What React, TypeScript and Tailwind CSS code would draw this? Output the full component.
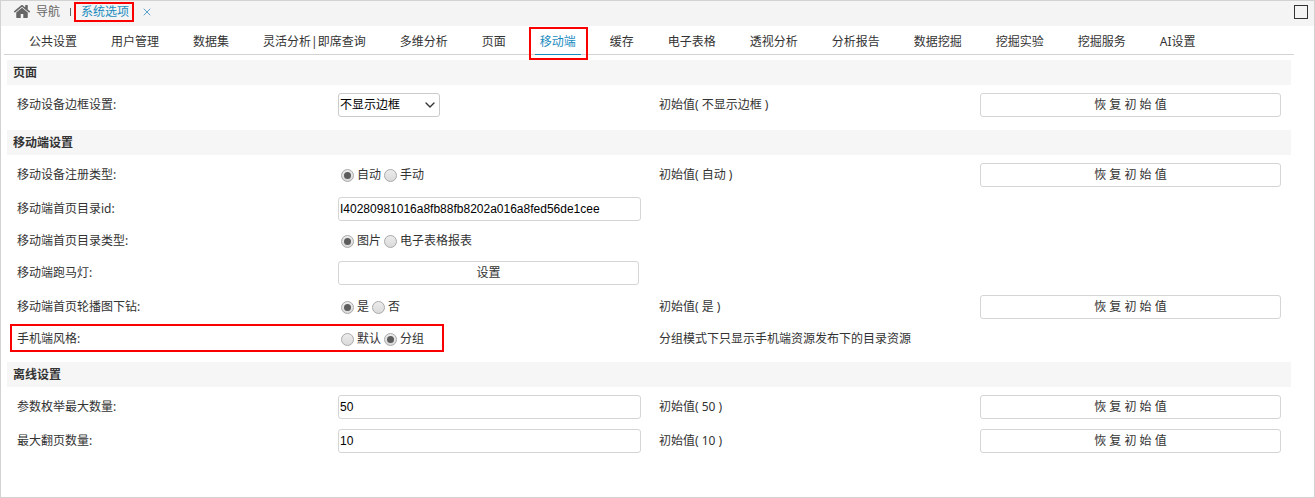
import React, { useState } from 'react';
import { ChevronDown, X } from 'lucide-react';

const tabs = [
  '公共设置',
  '用户管理',
  '数据集',
  '灵活分析|即席查询',
  '多维分析',
  '页面',
  '移动端',
  '缓存',
  '电子表格',
  '透视分析',
  '分析报告',
  '数据挖掘',
  '挖掘实验',
  '挖掘服务',
  'AI设置',
];

function HomeIcon() {
  return (
    <svg viewBox="96 250 1600 1290" className="h-[13px] w-4" fill="currentColor" aria-hidden="true">
      <path d="M1472 992v480q0 26-19 45t-45 19h-384v-384h-256v384h-384q-26 0-45-19t-19-45v-480q0-1 .5-3t.5-3l575-474 575 474q1 2 1 6zm223-69l-62 74q-8 9-21 11h-3q-13 0-21-7l-692-577-692 577q-12 8-24 7-13-2-21-11l-62-74q-8-10-7-23.5t11-21.5l719-599q32-26 76-26t76 26l244 204v-195q0-14 9-23t23-9h192q14 0 23 9t9 23v408l219 182q10 8 11 21.5t-7 23.5z" />
    </svg>
  );
}

function Highlight({ className }: { className: string }) {
  return <span className={`pointer-events-none absolute border-2 border-[#fa0000] ${className}`} />;
}

interface SectionProps {
  title: string;
  children: React.ReactNode;
}

function Section({ title, children }: SectionProps) {
  return (
    <section>
      <h2 className="h-[25px] bg-[#f6f6f6] px-1.5 leading-[25px] font-bold">{title}</h2>
      <div className="pt-[3px] pb-2">{children}</div>
    </section>
  );
}

interface RowProps {
  label: string;
  htmlFor?: string;
  note?: string;
  resettable?: boolean;
  compact?: boolean;
  highlighted?: boolean;
  children: React.ReactNode;
}

function Row({ label, htmlFor, note, resettable, compact, highlighted, children }: RowProps) {
  return (
    <div className={`relative grid grid-cols-4 items-center ${compact ? 'h-[30px]' : 'h-[34px]'}`}>
      <div className="px-2.5">
        {htmlFor ? <label htmlFor={htmlFor}>{label}:</label> : <span>{label}:</span>}
      </div>
      <div className="px-2.5">{children}</div>
      <div className="px-2.5">{note}</div>
      <div className="px-2.5">{resettable && <ActionButton>恢 复 初 始 值</ActionButton>}</div>
      {highlighted && <Highlight className="top-0 left-[3px] h-7 w-[434px]" />}
    </div>
  );
}

function ActionButton({ children }: { children: React.ReactNode }) {
  return (
    <button type="button" className="block h-6 w-full rounded-[3px] border border-[#d5d5d5] bg-white leading-[22px]">
      {children}
    </button>
  );
}

function TextField({ id, initial }: { id: string; initial: string }) {
  const [value, setValue] = useState(initial);

  return (
    <input
      id={id}
      type="text"
      value={value}
      onChange={e => setValue(e.target.value)}
      className="block h-6 w-[calc(100%+2px)] rounded-[3px] border border-[#d5d5d5] bg-white px-px font-['Liberation_Sans',Arial,sans-serif] text-black outline-none"
    />
  );
}

interface RadioGroupProps {
  name: string;
  options: string[];
  initial: string;
}

function RadioGroup({ name, options, initial }: RadioGroupProps) {
  const [selected, setSelected] = useState(initial);

  return (
    <div role="radiogroup" className="flex items-center">
      {options.map(option => (
        <label key={option} className="flex items-center">
          <input
            type="radio"
            name={name}
            checked={selected === option}
            onChange={() => setSelected(option)}
            className="mx-[3px] grid size-[13px] appearance-none place-items-center rounded-full border border-[#a9a9a9] bg-linear-to-b from-[#ececec] to-[#dadada] checked:before:size-[7px] checked:before:rounded-full checked:before:bg-[#5c5c5c] checked:before:content-['']"
          />
          {option}
        </label>
      ))}
    </div>
  );
}

export default function App() {
  const [activeTab, setActiveTab] = useState('移动端');

  return (
    <div className="min-h-screen border border-[#d2d2d2] bg-white font-['Noto_Sans','Noto_Sans_CJK_SC',sans-serif] text-[12px] leading-4 text-[#333]">
      <header className="flex h-[25px] items-center bg-[#f4f4f4] pr-1.5 pb-1 pl-[13px]">
        <a href="#nav" className="flex items-center gap-1.5 text-[#666]">
          <HomeIcon />
          导航
        </a>
        <span className="mx-2.5 h-2 w-px bg-[#666]" />
        <div className="relative">
          <a href="#options" className="text-[#1a8cbf]">系统选项</a>
          <Highlight className="-top-0.5 -left-[7px] h-5 w-[60px]" />
        </div>
        <button type="button" aria-label="关闭" className="ml-3 text-[#5ba3cb]">
          <X className="size-3" strokeWidth={2} />
        </button>
        <button type="button" aria-label="最大化" className="ml-auto size-3.5 border border-[#333]" />
      </header>

      <nav className="mr-5 ml-[3px] flex h-[29px] gap-6 border-b border-[#d2d2d2] pl-5" role="tablist">
        {tabs.map(tab => (
          <button
            key={tab}
            type="button"
            role="tab"
            aria-selected={activeTab === tab}
            onClick={() => setActiveTab(tab)}
            className={`relative -mb-px shrink-0 border-b px-[5px] pt-1 whitespace-nowrap ${
              activeTab === tab ? 'border-[#1a8cbf] text-[#1a8cbf]' : 'border-transparent'
            }`}
          >
            {tab}
            {tab === '移动端' && <Highlight className="top-px -left-1.5 h-[33px] w-[59px]" />}
          </button>
        ))}
      </nav>

      <main className="mt-[5px] mr-[23px] ml-1.5">
        <Section title="页面">
          <Row label="移动设备边框设置" htmlFor="frame" note="初始值( 不显示边框 )" resettable>
            <div className="relative w-[102px]">
              <select
                id="frame"
                defaultValue="none"
                className="block h-6 w-full appearance-none rounded-[3px] border border-[#cbcbcb] bg-white pl-px text-black outline-none"
              >
                <option value="none">不显示边框</option>
                <option value="show">显示边框</option>
              </select>
              <ChevronDown className="pointer-events-none absolute top-1 right-0.5 size-4" strokeWidth={2} />
            </div>
          </Row>
        </Section>

        <Section title="移动端设置">
          <Row label="移动设备注册类型" note="初始值( 自动 )" resettable>
            <RadioGroup name="register" options={['自动', '手动']} initial="自动" />
          </Row>
          <Row label="移动端首页目录id" htmlFor="home-id">
            <TextField id="home-id" initial="I40280981016a8fb88fb8202a016a8fed56de1cee" />
          </Row>
          <Row label="移动端首页目录类型" compact>
            <RadioGroup name="home-type" options={['图片', '电子表格报表']} initial="图片" />
          </Row>
          <Row label="移动端跑马灯">
            <ActionButton>设置</ActionButton>
          </Row>
          <Row label="移动端首页轮播图下钻" note="初始值( 是 )" resettable>
            <RadioGroup name="drill" options={['是', '否']} initial="是" />
          </Row>
          <Row label="手机端风格" note="分组模式下只显示手机端资源发布下的目录资源" compact highlighted>
            <RadioGroup name="style" options={['默认', '分组']} initial="分组" />
          </Row>
        </Section>

        <Section title="离线设置">
          <Row label="参数枚举最大数量" htmlFor="max-params" note="初始值( 50 )" resettable>
            <TextField id="max-params" initial="50" />
          </Row>
          <Row label="最大翻页数量" htmlFor="max-pages" note="初始值( 10 )" resettable>
            <TextField id="max-pages" initial="10" />
          </Row>
        </Section>
      </main>
    </div>
  );
}
